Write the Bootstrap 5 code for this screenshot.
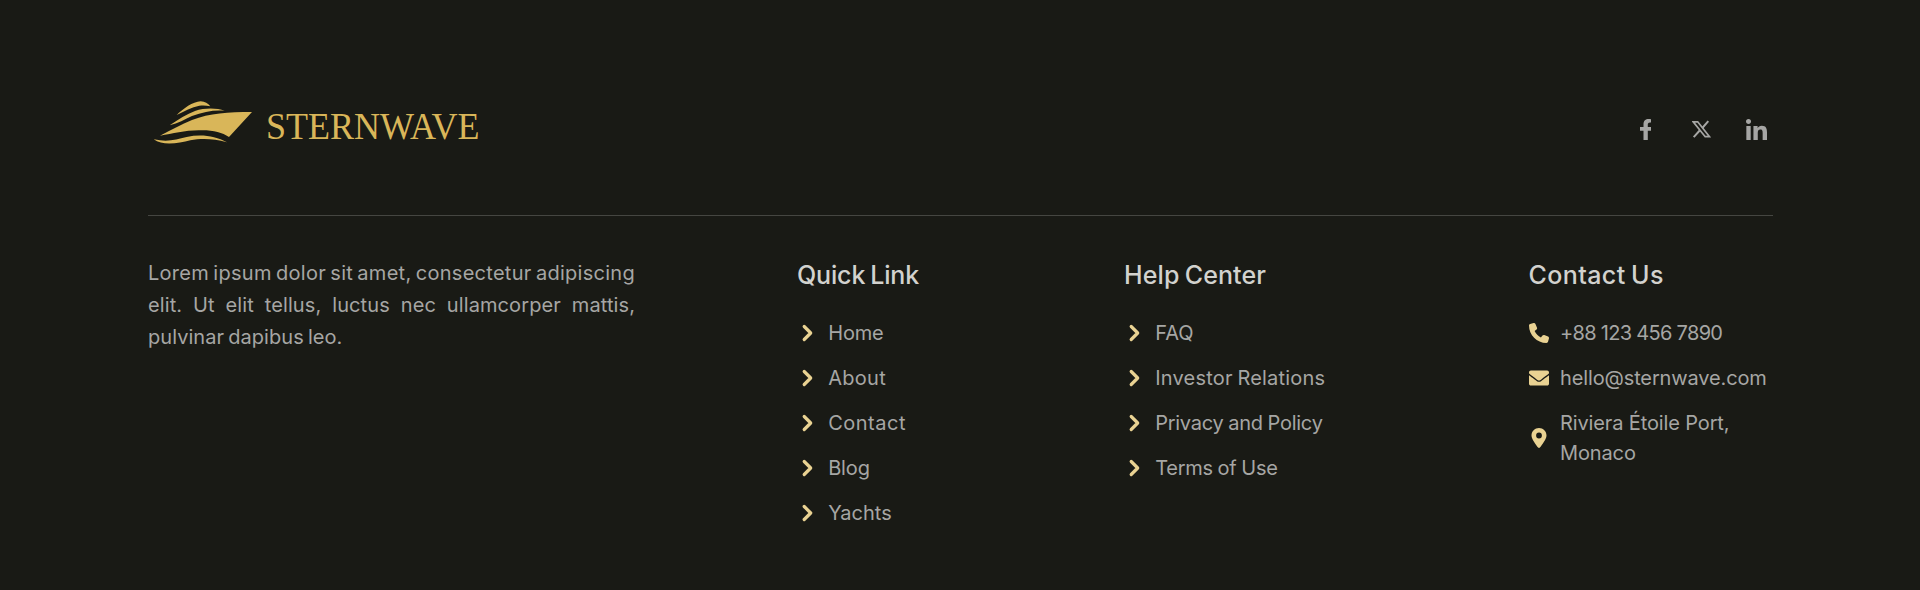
<!DOCTYPE html>
<html lang="en">
<head>
<meta charset="utf-8">
<meta name="viewport" content="width=device-width, initial-scale=1">
<title>Sternwave</title>
<link href="https://cdn.jsdelivr.net/npm/bootstrap@5.3.0/dist/css/bootstrap.min.css" rel="stylesheet">
<style>
body{background:#191a15;color:#a6a6a4;font-family:Inter,"Liberation Sans",sans-serif;font-size:20px;line-height:30px}
.site-footer{width:1625px;margin-left:148px;min-height:590px}
.top-bar{height:216px;border-bottom:1px solid #454641;padding-top:98px}
.logo{overflow:visible}
.social{gap:41px;margin:21px 6px 0 0}
.social svg{display:block;fill:#a6a6a4}
.social .in{margin-left:-6px}
.footer-cols{display:grid;grid-template-columns:649px 327px 404.5px 1fr;padding-top:41px}
.blurb{width:487px;margin-top:0;line-height:32px}
.blurb span{display:block;text-align-last:justify;white-space:nowrap}
.blurb span:nth-child(2){letter-spacing:.1px}
.blurb span:last-child{width:194px;letter-spacing:.05px;word-spacing:-1.5px}
.blurb span:first-child{letter-spacing:.28px;word-spacing:-1.8px}
h2{font-size:25px;font-weight:500;line-height:36px;color:#d2d2ce;margin:0 0 25px;white-space:nowrap;word-spacing:-1.5px}
.footer-list{display:grid;gap:15px;white-space:nowrap}
.footer-list a{color:inherit;text-decoration:none}
.footer-list svg{fill:#e9d292;flex:none}
.links svg{width:20px;height:20px;margin-right:11.2px}
.contact svg{width:20px;height:20px;margin-right:11.5px}
.t0{letter-spacing:-.15px}.t1{letter-spacing:.4px}.t2{letter-spacing:.1px}
.k0{letter-spacing:-.15px}.k1{letter-spacing:.3px}.k2{letter-spacing:.5px}
.k3{letter-spacing:.2px;word-spacing:-1px}.k4{letter-spacing:-.27px;word-spacing:-.5px}.k5{letter-spacing:-.7px}.k6{letter-spacing:-.13px}
</style>
</head>
<body>
<svg class="d-none">
  <symbol id="chev" viewBox="0 0 20 20"><path d="M7.2 3.5 13.7 10l-6.5 6.5" fill="none" stroke="#e9d292" stroke-width="3.2" stroke-linecap="round" stroke-linejoin="round"/></symbol>
</svg>
<footer class="site-footer">
  <div class="top-bar d-flex justify-content-between align-items-start">
    <svg class="logo" width="336" height="54" viewBox="148 98 336 54" role="img" aria-label="Sternwave">
      <g fill="#d9b659" transform="translate(140 90) scale(.33333)">
        <path d="M110 75C130 56 158 35 182 34C195 34 204 41 211 49C200 46 188 46 178 47C155 51 133 64 110 75Z"/>
        <path d="M89 106C116 88 140 72 165 63C195 53 230 54 254 62C224 59 190 65 156 78C135 88 114 100 89 106Z"/>
        <path d="M60 137C92 121 124 103 156 90C210 69 264 66 336 66L267 141C247 128 222 121 187 121C140 119 102 130 60 137Z"/>
        <path d="M41 148C84 157 107 149 140 141C182 132 225 137 261 157C219 145 183 145 151 151C115 160 68 168 41 148Z"/>
      </g>
      <text x="266" y="138.5" fill="#d9b659" font-family="Liberation Serif, serif" font-size="37.5" textLength="213.5" lengthAdjust="spacingAndGlyphs">STERNWAVE</text>
    </svg>
    <div class="social d-flex">
      <svg width="11" height="21" viewBox="22.9 0 256.3 512" preserveAspectRatio="none"><path d="M279.14 288l14.22-92.66h-88.91v-60.13c0-25.35 12.42-50.06 52.24-50.06h40.42V6.26S260.43 0 225.36 0c-73.22 0-121.08 44.38-121.08 124.72v70.62H22.89V288h81.39v224h100.17V288z"/></svg>
      <svg width="19" height="21" viewBox="0 0 19 21"><g fill="none" stroke="#a6a6a4"><path d="M1.2 2.8h4.5l11.8 14.9h-4.3Z" stroke-width="1.7"/><path d="M16.3 2.2 10.3 9M7.7 11.5 1.7 18.2" stroke-width="2"/></g></svg>
      <svg class="in" width="21" height="21" viewBox="0 32 448 448"><path d="M100.28 480H7.4V180.9h92.88zM53.79 140.1C24.09 140.1 0 115.5 0 85.8a53.79 53.79 0 0 1 107.58 0c0 29.7-24.1 54.3-53.79 54.3zM447.9 480h-92.68V334.4c0-34.7-.7-79.2-48.29-79.2-48.29 0-55.69 37.7-55.69 76.7V480h-92.78V180.9h89.08v40.8h1.3c12.4-23.5 42.69-48.3 87.88-48.3 94 0 111.28 61.9 111.28 142.3V480z"/></svg>
    </div>
  </div>
  <div class="footer-cols">
    <p class="blurb"><span>Lorem ipsum dolor sit amet, consectetur adipiscing</span><span>elit. Ut elit tellus, luctus nec ullamcorper mattis,</span><span>pulvinar dapibus leo.</span></p>
    <section>
      <h2 class="t0">Quick Link</h2>
      <ul class="list-unstyled footer-list links mb-0">
        <li class="d-flex align-items-center"><svg><use href="#chev"/></svg><a href="#" class="k0">Home</a></li>
        <li class="d-flex align-items-center"><svg><use href="#chev"/></svg><a href="#" class="k1">About</a></li>
        <li class="d-flex align-items-center"><svg><use href="#chev"/></svg><a href="#" class="k2">Contact</a></li>
        <li class="d-flex align-items-center"><svg><use href="#chev"/></svg><a href="#" class="k0">Blog</a></li>
        <li class="d-flex align-items-center"><svg><use href="#chev"/></svg><a href="#">Yachts</a></li>
      </ul>
    </section>
    <section>
      <h2 class="t2">Help Center</h2>
      <ul class="list-unstyled footer-list links mb-0">
        <li class="d-flex align-items-center"><svg><use href="#chev"/></svg><a href="#">FAQ</a></li>
        <li class="d-flex align-items-center"><svg><use href="#chev"/></svg><a href="#" class="k3">Investor Relations</a></li>
        <li class="d-flex align-items-center"><svg><use href="#chev"/></svg><a href="#" class="k4">Privacy and Policy</a></li>
        <li class="d-flex align-items-center"><svg><use href="#chev"/></svg><a href="#" class="k4">Terms of Use</a></li>
      </ul>
    </section>
    <section>
      <h2 class="t1">Contact Us</h2>
      <ul class="list-unstyled footer-list contact mb-0">
        <li class="d-flex align-items-center"><svg viewBox="0 0 512 512"><path d="M164.9 24.6c-7.7-18.6-28-28.5-47.4-23.2l-88 24C12.1 30.2 0 46 0 64C0 311.4 200.6 512 448 512c18 0 33.8-12.1 38.6-29.5l24-88c5.3-19.4-4.6-39.7-23.2-47.4l-96-40c-16.3-6.8-35.2-2.1-46.3 11.6L304.7 368C234.3 334.7 177.3 277.7 144 207.3L193.3 167c13.7-11.2 18.4-30 11.6-46.3l-40-96z"/></svg><a href="#" class="k5">+88 123 456 7890</a></li>
        <li class="d-flex align-items-center"><svg viewBox="0 0 512 512"><path d="M502.3 190.8c3.9-3.1 9.7-.2 9.7 4.7V400c0 26.5-21.5 48-48 48H48c-26.5 0-48-21.5-48-48V195.6c0-5 5.7-7.8 9.7-4.7 22.4 17.4 52.1 39.5 154.1 113.6 21.1 15.4 56.7 47.8 92.2 47.6 35.7.3 72-32.8 92.3-47.6 102-74.1 131.6-96.3 154-113.7zM256 320c23.2.4 56.6-29.2 73.4-41.4 132.7-96.3 142.8-104.7 173.4-128.7 5.8-4.5 9.2-11.5 9.2-18.9v-19c0-26.5-21.5-48-48-48H48c-26.5 0-48 21.5-48 48v19c0 7.4 3.4 14.3 9.2 18.9 30.6 23.9 40.7 32.4 173.4 128.7 16.8 12.2 50.2 41.8 73.4 41.4z"/></svg><a href="#" class="k6">hello@sternwave.com</a></li>
        <li class="d-flex align-items-center"><svg viewBox="-64 0 512 512"><path fill-rule="evenodd" d="M215.7 499.2C267 435 384 279.4 384 192C384 86 298 0 192 0S0 86 0 192c0 87.4 117 243 168.3 307.2c12.3 15.3 35.1 15.3 47.4 0zM192 118a74 74 0 1 1 0 148 74 74 0 1 1 0-148z"/></svg><span class="k6">Riviera Étoile Port,<br>Monaco</span></li>
      </ul>
    </section>
  </div>
</footer>
<script src="https://cdn.jsdelivr.net/npm/bootstrap@5.3.0/dist/js/bootstrap.bundle.min.js"></script>
</body>
</html>
